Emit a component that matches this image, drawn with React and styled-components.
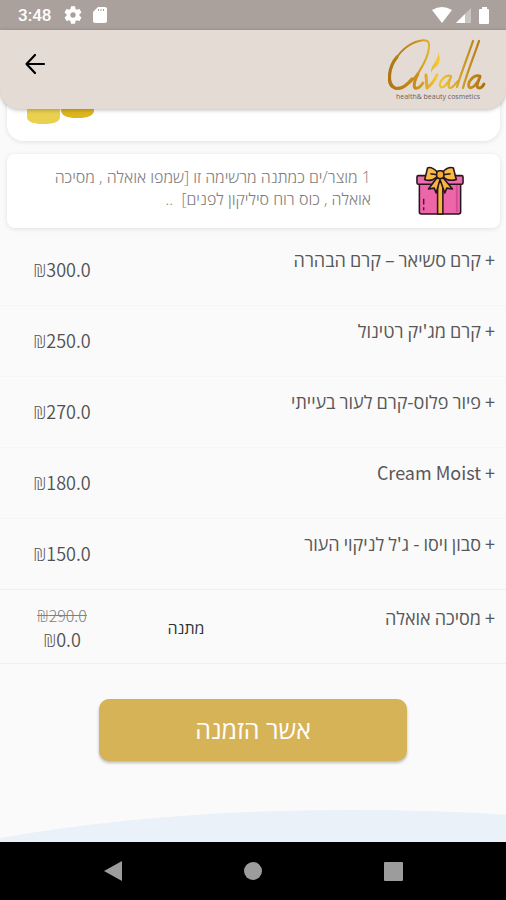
import React from "react";
import styled, { createGlobalStyle } from "styled-components";

const GlobalStyle = createGlobalStyle`
  *, *::before, *::after { box-sizing: border-box; }
  body {
    margin: 0;
    background: #fafafa;
    color: #484848;
    font-family: "Open Sans", "Noto Sans", sans-serif;
  }
`;

const Screen = styled.div`
  display: flex;
  flex-direction: column;
  min-height: 100vh;
  overflow: hidden;
`;

const StatusBar = styled.div`
  display: flex;
  align-items: center;
  justify-content: space-between;
  height: 30px;
  padding: 0 13px 0 18px;
  background: #aaa19c;
  color: #fff;
`;

const StatusGroup = styled.div`
  display: flex;
  align-items: center;
  gap: ${(p) => p.$gap}px;
`;

const Clock = styled.time`
  margin-right: 2px;
  font: 500 17px/30px Roboto, sans-serif;
`;

const Header = styled.header`
  position: relative;
  z-index: 1;
  display: flex;
  align-items: flex-start;
  justify-content: space-between;
  height: 79px;
  padding: 6px 16px 0 20px;
  border-radius: 0 0 20px 20px;
  background: #e4dbd5;
  box-shadow: 0 1px 4px rgba(0, 0, 0, 0.28);
`;

const BackButton = styled.button`
  display: flex;
  margin-top: 13px;
  padding: 0;
  border: 0;
  background: none;
  color: #000;
`;

const Content = styled.main`
  flex: 1;
  display: flex;
  flex-direction: column;
`;

const Card = styled.section`
  margin: 0 6px 0 7px;
  background: #fff;
  box-shadow: 0 1px 5px rgba(0, 0, 0, 0.1);
`;

const ProductCard = styled(Card)`
  height: 62px;
  margin-top: -30px;
  padding: 25px 20px 0;
  border-radius: 16px;
`;

const GiftCard = styled(Card)`
  display: flex;
  align-items: flex-start;
  min-height: 74px;
  margin-top: 13px;
  margin-bottom: 7px;
  padding: 12px 36px 0 0;
  border-radius: 8px;
`;

const GiftText = styled.p`
  flex: 1;
  margin: 0 45px 0 0;
  color: #7c7c7c;
  font-size: 16px;
  font-weight: 300;
  line-height: 22px;
  white-space: pre-wrap;
`;

const List = styled.ul`
  margin: 0;
  padding: 0;
  list-style: none;
`;

const Row = styled.li`
  display: grid;
  grid-template-columns: 1fr 124px 124px;
  min-height: ${(p) => (p.$gift ? 74 : 71)}px;
  padding-top: ${(p) => (p.$gift ? 14 : 11)}px;
  padding-right: 11px;
  border-bottom: 1px solid ${(p) => (p.$strong ? "#efefef" : "#f6f6f6")};
`;

const Title = styled.span`
  color: #585858;
  font: 400 18px/26px "Noto Sans CJK SC", "Open Sans", sans-serif;
`;

const Tag = styled.span`
  padding-top: 10px;
  color: #333;
  font-size: 16px;
  line-height: 28px;
  text-align: center;
`;

const PriceBox = styled.span`
  display: flex;
  flex-direction: column;
  align-items: center;
  padding-top: ${(p) => (p.$gift ? 0 : 10)}px;
`;

const Price = styled.span`
  color: #505050;
  font: 350 18px/26px "Noto Sans CJK SC", "Open Sans", sans-serif;
`;

const OldPrice = styled.s`
  color: #808080;
  font: 300 16px/22px "Noto Sans CJK SC", "Open Sans", sans-serif;
`;

const ConfirmButton = styled.button`
  align-self: center;
  width: 61%;
  height: 62px;
  margin: 35px 0 24px;
  padding: 0 0 2px;
  border: 0;
  border-radius: 10px;
  background: #d7b358;
  box-shadow: 0 2px 3px rgba(0, 0, 0, 0.25);
  color: #fff;
  font: 400 25px/34px "Open Sans", sans-serif;
`;

const Wave = styled.svg`
  display: block;
  width: 100%;
  height: 32px;
  margin-top: auto;
`;

const NavBar = styled.nav`
  display: grid;
  grid-template-columns: repeat(3, 140px);
  justify-content: center;
  height: 58px;
  background: #000;
`;

const NavButton = styled.button`
  display: flex;
  align-items: center;
  justify-content: center;
  padding: 0;
  border: 0;
  background: none;
  color: #9c9c9c;
`;

const products = [
  { name: "קרם סשיאר – קרם הבהרה", price: "300.0" },
  { name: "קרם מג'יק רטינול", price: "250.0" },
  { name: "פיור פלוס-קרם לעור בעייתי", price: "270.0" },
  { name: "Cream Moist", price: "180.0" },
  { name: "סבון ויסו - ג'ל לניקוי העור", price: "150.0", strong: true },
  { name: "מסיכה אואלה", price: "0.0", oldPrice: "290.0", tag: "מתנה", strong: true },
];

function Logo() {
  return (
    <svg width="104" height="68" viewBox="386 36 104 68" role="img" aria-label="avalla">
      <defs>
        <linearGradient id="gold" x1="386" x2="488" y1="0" y2="0" gradientUnits="userSpaceOnUse">
          <stop offset="0" stopColor="#a97412" />
          <stop offset=".3" stopColor="#c98f1c" />
          <stop offset=".5" stopColor="#f3c838" />
          <stop offset=".68" stopColor="#dda92a" />
          <stop offset="1" stopColor="#a8680c" />
        </linearGradient>
      </defs>
      <g fill="none" stroke="url(#gold)" strokeLinecap="round" strokeLinejoin="round">
        <path strokeWidth="2" d="M408 46 C417 40 428 38 429 44 C430 55 419 76 407 85 C399 91 389 90 389 79 C389 66 399 52 408 46" />
        <path strokeWidth="3.2" d="M397 57 C389 66 386 84 395 88 C401 90 407 85 412 79" />
        <path strokeWidth="3" d="M418 74 C415 79 413 86 415 88 C418 89 421 86 423 83" />
        <path strokeWidth="3" d="M426 75 L427 88 C432 84 435 80 437 75" />
        <path strokeWidth="2.2" d="M451 76 C445 74 439 82 440 86 C442 90 448 84 451 77 C448 84 448 88 450 88 C453 88 455 84 458 81" />
        <path strokeWidth="2.2" d="M473 41 C468 56 461 73 457 87 M479 41 C474 56 467 73 463 88" />
        <path strokeWidth="2.8" d="M480 76 C473 74 467 83 469 87 C472 90 478 83 480 77 C477 84 476 88 479 88 C481 88 483 86 484 84" />
      </g>
      <path fill="url(#gold)" d="M438 52 C439 61 430 64 431 74 C431 71 433 69 436 67 C441 63 440 57 438 52Z" />
      <text x="396" y="99" fill="#6b625f" fontFamily="Open Sans, sans-serif" fontSize="7">health&amp; beauty cosmetics</text>
    </svg>
  );
}

function GiftIcon() {
  return (
    <svg width="48" height="50" viewBox="0 0 50 52" aria-hidden="true">
      <g stroke="#25151d" strokeWidth="1.6" strokeLinejoin="round">
        <path fill="#ee65aa" d="M3.500 18H46.500V48Q46.500 50 44.500 50H5.500Q3.500 50 3.500 48Z" />
        <rect x="1" y="10" width="48" height="9" rx="1.500" fill="#f06baf" />
        <rect x="22.500" y="12" width="5.500" height="38" fill="#f5b53e" />
        <path fill="#f5b53e" d="M22 12 L13 24 L19 23 L21 28 L25 14 L30 28 L32 23 L38 24 L28 12Z" />
        <path fill="#f8bb45" d="M22 6 C18 2 14 1 12 2 C11 6 10 11 9 14 C14 16 19 14 22 11Z" />
        <path fill="#f8bb45" d="M28 6 C32 2 36 1 39 2 C40 6 41 11 42 14 C36 16 31 14 28 11Z" />
        <path fill="none" d="M15 8 L22 9 M28 9 L36 8" />
        <rect x="21.500" y="5" width="7.500" height="8" rx="3" fill="#f2ad35" />
      </g>
      <path d="M42.500 20V48" stroke="#cf4d91" strokeWidth="2" />
      <path d="M8 46V43M8 40V34" stroke="#3a1729" strokeWidth="1.500" />
    </svg>
  );
}

function ProductRow({ item }) {
  const gift = Boolean(item.oldPrice);
  return (
    <Row $gift={gift} $strong={item.strong}>
      <Title>+ {item.name}</Title>
      <Tag>{item.tag}</Tag>
      <PriceBox dir="ltr" $gift={gift}>
        {gift && <OldPrice>₪{item.oldPrice}</OldPrice>}
        <Price>₪{item.price}</Price>
      </PriceBox>
    </Row>
  );
}

export default function App() {
  return (
    <Screen>
      <GlobalStyle />
      <StatusBar>
        <StatusGroup $gap={11}>
          <Clock>3:48</Clock>
          <svg width="18" height="18" viewBox="2 2 20 20" fill="currentColor" aria-hidden="true">
            <path d="M19.140 12.940c.04-.3.060-.61.060-.94s-.02-.64-.07-.94l2.030-1.580a.5.5 0 0 0 .12-.61l-1.920-3.320a.5.5 0 0 0-.59-.22l-2.390.96a7 7 0 0 0-1.620-.94L14.400 2.810a.5.5 0 0 0-.48-.41h-3.840a.5.5 0 0 0-.47.41l-.36 2.540a7 7 0 0 0-1.620.94l-2.390-.96a.5.5 0 0 0-.59.22L2.740 8.870a.5.5 0 0 0 .12.61l2.030 1.580a6 6 0 0 0 0 1.880l-2.030 1.580a.5.5 0 0 0-.12.61l1.920 3.320c.12.220.37.290.59.220l2.390-.96c.5.380 1.030.7 1.620.94l.36 2.540c.05.240.24.410.48.410h3.840c.24 0 .44-.17.470-.41l.36-2.540a7 7 0 0 0 1.620-.94l2.390.96c.22.080.47 0 .59-.22l1.920-3.320a.5.5 0 0 0-.12-.61zM12 15a3 3 0 1 1 0-6 3 3 0 0 1 0 6z" />
          </svg>
          <svg width="14" height="16" viewBox="0 0 14 16" aria-hidden="true">
            <path fill="currentColor" d="M5 0H12Q14 0 14 2V14Q14 16 12 16H2Q0 16 0 14V5Z" />
            <path stroke="#aaa19c" d="M5.500 2V4M8 2V4M10.500 2V4" />
          </svg>
        </StatusGroup>
        <StatusGroup $gap={4}>
          <svg width="20" height="16" viewBox="0 0 20 16" aria-hidden="true">
            <path fill="currentColor" d="M0 3Q10-3 20 3L10 16Z" />
          </svg>
          <svg width="15" height="15" viewBox="0 0 15 15" aria-hidden="true">
            <path fill="#cbc5c2" d="M15 0V15H0Z" />
            <path fill="currentColor" d="M9 6V15H0Z" />
          </svg>
          <svg width="18" height="17" viewBox="0 0 18 17" aria-hidden="true">
            <path fill="currentColor" d="M7 2V0H12V2H13Q14 2 14 3V16Q14 17 13 17H5Q4 17 4 16V3Q4 2 5 2Z" />
          </svg>
        </StatusGroup>
      </StatusBar>

      <Header>
        <BackButton type="button" aria-label="חזרה">
          <svg width="30" height="30" viewBox="0 0 30 30" fill="none" stroke="currentColor" strokeWidth="2.200" strokeLinecap="round" strokeLinejoin="round" aria-hidden="true">
            <path d="M24 15H6.500M15 6L6.500 15L15 24" />
          </svg>
        </BackButton>
        <Logo />
      </Header>

      <Content dir="rtl">
        <ProductCard dir="ltr">
          <svg width="70" height="20" viewBox="0 0 70 20" aria-hidden="true">
            <path fill="#dfb51c" d="M34 0H67V6Q67 14 50.500 14Q34 14 34 6Z" />
            <path fill="#ead04f" d="M0 0H33V13Q33 20 16.500 20Q0 20 0 13Z" />
          </svg>
        </ProductCard>
        <GiftCard>
          <GiftIcon />
          <GiftText>{"1 מוצר/ים כמתנה מרשימה זו [שמפו אואלה , מסיכה\nאואלה , כוס רוח סיליקון לפנים]  .."}</GiftText>
        </GiftCard>
        <List>
          {products.map((item) => (
            <ProductRow key={item.name} item={item} />
          ))}
        </List>
        <ConfirmButton type="button">אשר הזמנה</ConfirmButton>
        <Wave viewBox="0 0 506 32" preserveAspectRatio="none" aria-hidden="true">
          <path fill="#eaf1f8" d="M0 28Q160 0 350 0Q440 0 506 5V32H0Z" />
        </Wave>
      </Content>

      <NavBar>
        <NavButton type="button" aria-label="Back">
          <svg width="20" height="22" viewBox="0 0 20 22" aria-hidden="true"><path fill="currentColor" d="M19 1V21L1 11Z" /></svg>
        </NavButton>
        <NavButton type="button" aria-label="Home">
          <svg width="18" height="18" viewBox="0 0 18 18" aria-hidden="true"><circle fill="currentColor" cx="9" cy="9" r="9" /></svg>
        </NavButton>
        <NavButton type="button" aria-label="Recent apps">
          <svg width="19" height="19" viewBox="0 0 19 19" aria-hidden="true"><rect fill="currentColor" width="19" height="19" rx="1" /></svg>
        </NavButton>
      </NavBar>
    </Screen>
  );
}
